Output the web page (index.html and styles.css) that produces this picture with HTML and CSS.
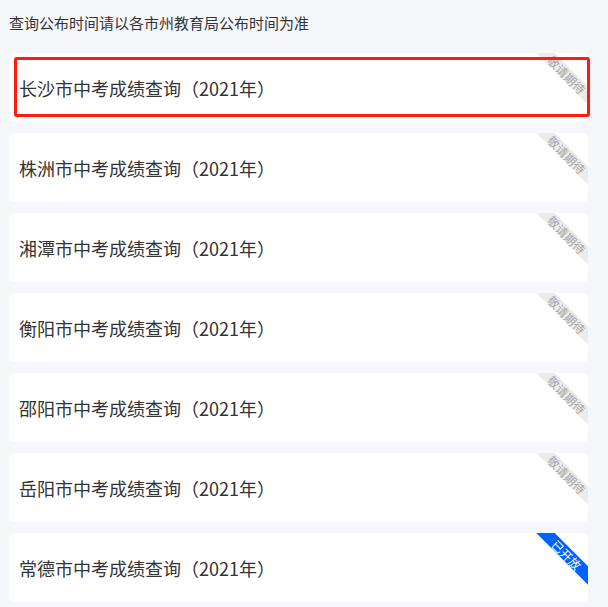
FILE: index.html
```html
<!DOCTYPE html>
<html lang="zh-CN">
<head>
<meta charset="utf-8">
<title>中考成绩查询</title>
<link rel="stylesheet" href="styles.css">
</head>
<body>
<div class="page">
  <p class="notice">查询公布时间请以各市州教育局公布时间为准</p>
  <ul class="list">
    <li class="card is-focused">
      <span class="name">长沙市中考成绩查询（2021年）</span>
      <span class="ribbon"><span class="band band-wait">敬请期待</span></span>
      <span class="focus-ring"></span>
    </li>
    <li class="card">
      <span class="name">株洲市中考成绩查询（2021年）</span>
      <span class="ribbon"><span class="band band-wait">敬请期待</span></span>
    </li>
    <li class="card">
      <span class="name">湘潭市中考成绩查询（2021年）</span>
      <span class="ribbon"><span class="band band-wait">敬请期待</span></span>
    </li>
    <li class="card">
      <span class="name">衡阳市中考成绩查询（2021年）</span>
      <span class="ribbon"><span class="band band-wait">敬请期待</span></span>
    </li>
    <li class="card">
      <span class="name">邵阳市中考成绩查询（2021年）</span>
      <span class="ribbon"><span class="band band-wait">敬请期待</span></span>
    </li>
    <li class="card">
      <span class="name">岳阳市中考成绩查询（2021年）</span>
      <span class="ribbon"><span class="band band-wait">敬请期待</span></span>
    </li>
    <li class="card">
      <span class="name">常德市中考成绩查询（2021年）</span>
      <span class="ribbon"><span class="band band-open">已开放</span></span>
    </li>
  </ul>
</div>
</body>
</html>
```

FILE: styles.css
```css
html, body {
  margin: 0;
  padding: 0;
  background: #f6f7fb;
  font-family: "Microsoft YaHei", "Noto Sans CJK SC", "Noto Sans", sans-serif;
  color: #333;
}

.page {
  padding: 12px 20px 0 9px;
}

.notice {
  margin: 0 0 20px;
  font-size: 15px;
  line-height: 21px;
  height: 21px;
  color: #333;
}

.list {
  list-style: none;
  margin: 0;
  padding: 0;
  display: flex;
  flex-direction: column;
  gap: 11px;
}

.card {
  position: relative;
  width: 579px;
  height: 69px;
  box-sizing: border-box;
  background: #fff;
  border-radius: 6px;
  display: flex;
  align-items: center;
  padding-left: 10px;
}

.name {
  font-size: 18px;
  line-height: 24px;
  color: #333;
  white-space: nowrap;
}

.ribbon {
  position: absolute;
  top: 0;
  right: 0;
  width: 64px;
  height: 64px;
  overflow: hidden;
  border-top-right-radius: 6px;
}

.band {
  position: absolute;
  top: 15px;
  right: -18.5px;
  width: 80px;
  height: 13px;
  line-height: 13px;
  font-size: 12px;
  text-align: center;
  transform: rotate(45deg);
  white-space: nowrap;
}

.band-wait {
  background: #ececec;
  color: #a6a6a6;
}

.band-open {
  background: #0062ff;
  color: #fff;
}

.focus-ring {
  position: absolute;
  left: 5px;
  top: 4px;
  right: -2px;
  bottom: 5px;
  border: 3px solid #ff1a12;
  border-radius: 3px;
  pointer-events: none;
}
```
